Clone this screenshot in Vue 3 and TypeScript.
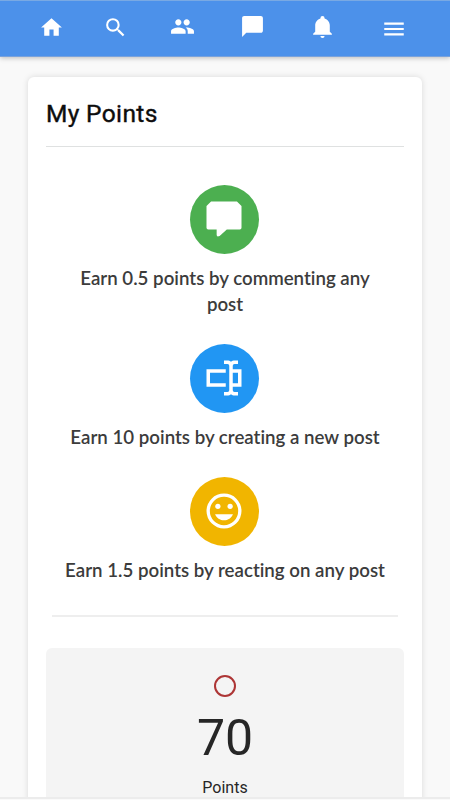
<script setup lang="ts">
interface NavItem {
  name: string
  path: string
}

interface Rule {
  kind: 'comment' | 'create' | 'react'
  text: string
}

const nav: NavItem[] = [
  { name: 'home', path: 'M10 20v-6h4v6h5v-8h3L12 3 2 12h3v8z' },
  {
    name: 'search',
    path: 'M15.5 14h-.79l-.28-.27A6.471 6.471 0 0 0 16 9.5 6.5 6.5 0 1 0 9.5 16c1.61 0 3.09-.59 4.23-1.57l.27.28v.79l5 4.99L20.49 19l-4.99-5zm-6 0C7.01 14 5 11.99 5 9.5S7.01 5 9.5 5 14 7.01 14 9.5 11.99 14 9.5 14z',
  },
  {
    name: 'people',
    path: 'M16 11c1.66 0 2.99-1.34 2.99-3S17.66 5 16 5s-3 1.34-3 3 1.34 3 3 3zm-8 0c1.66 0 2.99-1.34 2.99-3S9.66 5 8 5 5 6.34 5 8s1.34 3 3 3zm0 2c-2.33 0-7 1.17-7 3.5V19h14v-2.5c0-2.33-4.67-3.5-7-3.5zm8 0c-.29 0-.62.02-.97.05 1.16.84 1.97 1.97 1.97 3.45V19h6v-2.5c0-2.33-4.67-3.5-7-3.5z',
  },
  { name: 'chat', path: 'M20 2H4c-1.1 0-2 .9-2 2v18l4-4h14c1.1 0 2-.9 2-2V4c0-1.1-.9-2-2-2z' },
  {
    name: 'bell',
    path: 'M21 19v1H3v-1l2-2v-6c0-3.1 2.03-5.83 5-6.71V4a2 2 0 0 1 4 0v.29c2.97.88 5 3.61 5 6.71v6l2 2m-7 2a2 2 0 0 1-4 0',
  },
  { name: 'menu', path: 'M3 18h18v-2H3v2zm0-5h18v-2H3v2zm0-7v2h18V6H3z' },
]

const rules: Rule[] = [
  { kind: 'comment', text: 'Earn 0.5 points by commenting any post' },
  { kind: 'create', text: 'Earn 10 points by creating a new post' },
  { kind: 'react', text: 'Earn 1.5 points by reacting on any post' },
]

const points = 70
</script>

<template>
  <div class="screen">
    <nav class="bar">
      <svg v-for="item in nav" :key="item.name" :class="['nav-icon', item.name]" viewBox="0 0 24 24">
        <path :d="item.path" />
      </svg>
    </nav>
    <main class="card">
      <h1 class="title">My Points</h1>
      <ul class="rules">
        <li v-for="rule in rules" :key="rule.kind" class="rule">
          <span :class="['badge', rule.kind]">
            <svg v-if="rule.kind === 'comment'" viewBox="0 0 24 24">
              <path d="M4.6 2H19.4L22 4.6V17Q22 18 21 18H13.6L9.5 21.7Q7.8 22.5 7.8 21V18H3Q2 18 2 17V4.6Z" />
            </svg>
            <svg v-else-if="rule.kind === 'create'" viewBox="0 0 24 24">
              <path
                d="M17 7h5v10h-5v2a1 1 0 0 0 1 1h2v2h-2.5c-.55 0-1.5-.45-1.5-1 0 .55-.95 1-1.5 1H12v-2h2a1 1 0 0 0 1-1V5a1 1 0 0 0-1-1h-2V2h2.5c.55 0 1.5.45 1.5 1 0-.55.95-1 1.5-1H20v2h-2a1 1 0 0 0-1 1v2M2 7h11v2H4v6h9v2H2V7m18 8V9h-3v6h3z"
              />
            </svg>
            <svg v-else viewBox="0 0 24 24">
              <path
                fill-rule="evenodd"
                d="M12 2a10 10 0 1 0 0 20 10 10 0 0 0 0-20zm0 1.9a8.1 8.1 0 1 1 0 16.2 8.1 8.1 0 0 1 0-16.2z"
              />
              <circle cx="8.5" cy="9.3" r="1.5" />
              <circle cx="15.5" cy="9.3" r="1.5" />
              <path d="M6.9 13.8H17.1C16.3 15.8 14.3 17.3 12 17.3S7.7 15.8 6.9 13.8z" />
            </svg>
          </span>
          <p class="text">{{ rule.text }}</p>
        </li>
      </ul>
      <hr class="divider" />
      <section class="total">
        <span class="ring"></span>
        <strong class="count">{{ points }}</strong>
        <span class="label">Points</span>
      </section>
    </main>
    <div class="edge"></div>
  </div>
</template>

<style>
body {
  margin: 0;
  background: #f9f9f9;
}
</style>

<style scoped>
.screen {
  box-sizing: border-box;
  position: relative;
  width: 450px;
  height: 800px;
  overflow: hidden;
  background: #f9f9f9;
  font-family: Roboto, sans-serif;
}

.bar {
  box-sizing: border-box;
  display: grid;
  grid-template-columns: 63.5px 67.5px 70px 70px 70.5px 26px;
  align-items: start;
  height: 57px;
  padding: 13px 0 0 39px;
  border-top: 1px solid #79a9e3;
  border-bottom: 1px solid #79a2dc;
  background: #4c91ea;
  box-shadow: 0 1px 5px rgba(0, 0, 0, 0.25);
}

.nav-icon {
  width: 25px;
  height: 25px;
  fill: #fff;
}

.home,
.search {
  margin-top: 1.4px;
}

.menu {
  width: 26px;
  height: 26px;
  margin-top: 2px;
}

.card {
  box-sizing: border-box;
  width: 394px;
  height: 760px;
  margin: 20px 0 0 28px;
  padding: 0 18px;
  border-radius: 6px;
  background: #fff;
  box-shadow: 0 0 6px rgba(0, 0, 0, 0.13);
}

.title {
  box-sizing: border-box;
  height: 70px;
  margin: 0;
  padding-top: 21px;
  border-bottom: 1px solid #dfe1e1;
  color: #0d0d0d;
  font-size: 24.5px;
  font-weight: 400;
  letter-spacing: 0.35px;
  line-height: 32px;
  -webkit-text-stroke: 0.4px #0d0d0d;
}

.rules {
  display: flex;
  flex-direction: column;
  gap: 26px;
  margin: 0;
  padding: 38px 16px 0;
  list-style: none;
}

.rule {
  display: flex;
  flex-direction: column;
  align-items: center;
}

.badge {
  display: flex;
  align-items: center;
  justify-content: center;
  width: 69px;
  height: 69px;
  margin-right: 1px;
  border-radius: 50%;
}

.badge svg {
  width: 42px;
  height: 42px;
  margin: 0 1px 1px 0;
  fill: #fff;
}

.comment {
  background: #4caf50;
}

.create {
  background: #2196f3;
}

.react {
  background: #f1b500;
}

.text {
  margin: 11px 0 1px;
  color: #3c3c3c;
  font-family: Lato, sans-serif;
  font-size: 18.7px;
  font-weight: 600;
  font-variant-ligatures: none;
  line-height: 26px;
  text-align: center;
}

.divider {
  height: 2px;
  margin: 31px 6px 0;
  border: 0;
  background: #eeeeee;
}

.total {
  display: flex;
  flex-direction: column;
  align-items: center;
  height: 170px;
  margin-top: 31px;
  border-radius: 6px;
  background: #f4f4f4;
  color: #262626;
}

.ring {
  box-sizing: border-box;
  width: 22px;
  height: 22px;
  margin: 27px 1px 0 0;
  border: 2px solid #ad3535;
  border-radius: 50%;
}

.count {
  margin-top: 11px;
  font-size: 50px;
  font-weight: 400;
  line-height: 60px;
}

.label {
  margin-top: 10px;
  font-size: 16px;
  line-height: 20px;
}

.edge {
  position: absolute;
  inset: auto 0 0;
  height: 3px;
  border-top: 2px solid #ececec;
  box-sizing: border-box;
  background: #fafafa;
}
</style>
